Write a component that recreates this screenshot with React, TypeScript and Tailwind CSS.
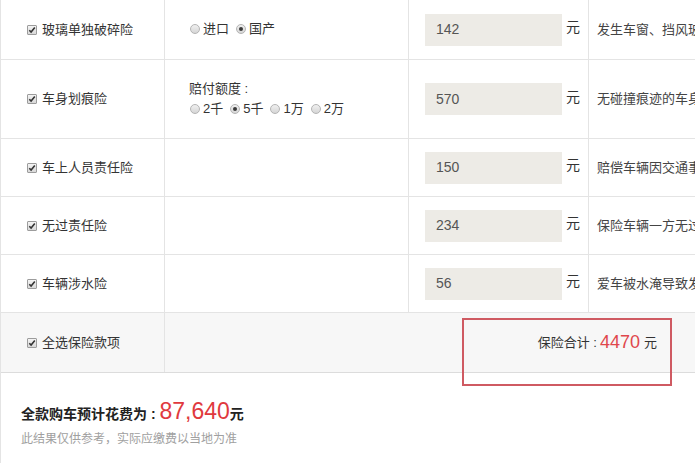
import React from 'react'

type Item = {
  name: string
  price: string
  desc: string
  h: string
  option?: 'origin' | 'amount'
}

const items: Item[] = [
  { name: '玻璃单独破碎险', price: '142', desc: '发生车窗、挡风玻璃单独破碎时给予赔偿', h: 'h-[60px]', option: 'origin' },
  { name: '车身划痕险', price: '570', desc: '无碰撞痕迹的车身表面油漆单独划伤', h: 'h-[79px]', option: 'amount' },
  { name: '车上人员责任险', price: '150', desc: '赔偿车辆因交通事故造成的车内人员伤亡', h: 'h-[58px]' },
  { name: '无过责任险', price: '234', desc: '保险车辆一方无过错时仍需承担的费用', h: 'h-[58px]' },
  { name: '车辆涉水险', price: '56', desc: '爱车被水淹导致发动机损坏时给予赔偿', h: 'h-[58px]' },
]

const Check = () => (
  <span className="inline-flex w-[10px] h-[10px] items-center justify-center border border-[#9c9c9c] rounded-[1px] bg-gradient-to-b from-[#f4f4f4] to-[#d8d8d8] mr-[5px] shrink-0">
    <svg width="8" height="8" viewBox="0 0 8 8">
      <path d="M1.3 4.2 L3.1 6 L6.8 1.6" fill="none" stroke="#333" strokeWidth="1.6" />
    </svg>
  </span>
)

const Radio = ({ on }: { on?: boolean }) => (
  <span className="inline-flex w-[10px] h-[10px] items-center justify-center rounded-full border border-[#b4b4b4] bg-gradient-to-b from-[#f0f0f0] to-[#d6d6d6] mr-[3px] shrink-0">
    {on && <span className="w-[4px] h-[4px] rounded-full bg-[#3a3a3a]" />}
  </span>
)

const Opt = ({ label, on }: { label: string; on?: boolean }) => (
  <span className="inline-flex items-center mr-[7px]">
    <Radio on={on} />
    <span>{label}</span>
  </span>
)

export default function App() {
  const font = { fontFamily: '"Liberation Sans", "Noto Sans CJK SC", sans-serif' }
  return (
    <div className="relative w-[695px] h-[463px] overflow-hidden bg-white text-[13px] text-[#333]" style={font}>
      <div className="w-[695px] border-l border-[#e4e4e4]">
        {items.map(it => (
          <div key={it.name} className={`flex ${it.h} border-b border-[#e4e4e4]`}>
            <div className="w-[164px] shrink-0 border-r border-[#e4e4e4] flex items-center pl-[26px]">
              <Check />
              <span>{it.name}</span>
            </div>
            <div className="w-[244px] shrink-0 border-r border-[#e4e4e4] flex flex-col justify-center pl-[25px]">
              {it.option === 'origin' && (
                <div className="flex items-center -mt-[2px]">
                  <Opt label="进口" />
                  <Opt label="国产" on />
                </div>
              )}
              {it.option === 'amount' && (
                <>
                  <div className="-ml-[1px] leading-[20px]">赔付额度 :</div>
                  <div className="flex items-center leading-[20px]">
                    <Opt label="2千" />
                    <Opt label="5千" on />
                    <Opt label="1万" />
                    <Opt label="2万" />
                  </div>
                </>
              )}
            </div>
            <div className="w-[180px] shrink-0 border-r border-[#e4e4e4] flex items-center pl-[16px]">
              <div className="w-[137px] h-[32px] bg-[#edebe6] flex items-center pl-[11px] text-[14px] text-[#555]">{it.price}</div>
              <span className="ml-[4px] -mt-[4px] text-[14px]">元</span>
            </div>
            <div className="flex-1 min-w-0 overflow-hidden whitespace-nowrap flex items-center pl-[8px] text-[#444]">
              {it.desc}
            </div>
          </div>
        ))}
        <div className="flex h-[60px] bg-[#f7f7f7] border-b border-[#dcdcdc]">
          <div className="w-[164px] shrink-0 border-r border-[#e4e4e4] flex items-center pl-[26px]">
            <Check />
            <span>全选保险款项</span>
          </div>
          <div className="flex-1 flex items-center justify-end pr-[38px]">
            <span className="mr-[3px]">保险合计 :</span>
            <span className="text-[#e0474c] text-[18px] mr-[4px]">4470</span>
            <span>元</span>
          </div>
        </div>
        <div className="h-[90px] pl-[20px] pt-[24px]">
          <div className="flex items-baseline">
            <span className="font-bold text-[14px] text-[#222]">全款购车预计花费为 :&nbsp;</span>
            <span className="text-[#e0393e] text-[23px] leading-[28px]">87,640</span>
            <span className="font-bold text-[14px] text-[#222]">元</span>
          </div>
          <div className="text-[12px] text-[#a0a0a0] mt-[5px]">此结果仅供参考，实际应缴费以当地为准</div>
        </div>
      </div>
      <div className="absolute left-[462px] top-[318px] w-[210px] h-[68px] border-2 border-[#cf5a62]" />
    </div>
  )
}
